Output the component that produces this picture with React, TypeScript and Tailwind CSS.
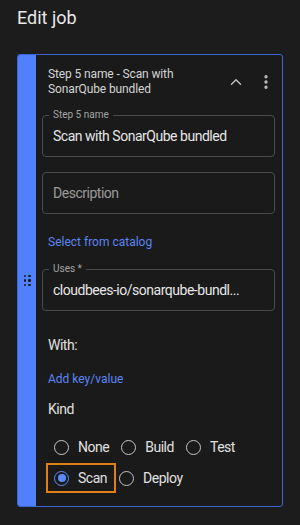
import { ChevronUp, EllipsisVertical } from "lucide-react";

const kinds = [
  ["None", "Build", "Test"],
  ["Scan", "Deploy"],
];

function OutlinedField({ label, value, placeholder }: { label?: string; value?: string; placeholder?: string }) {
  return (
    <div className="relative flex h-[42px] items-center rounded-[4px] border border-[#4a4a4a] pl-[10px]">
      {label && (
        <span className="absolute -top-[7px] left-[6px] bg-[#1a1a1a] px-[4px] text-[10px] leading-[12px] tracking-normal text-[#a3a3a3]">
          {label}
        </span>
      )}
      {value ? (
        <span className="truncate text-[14px] text-[#e6e6e6]">{value}</span>
      ) : (
        <span className="text-[14px] text-[#9a9a9a]">{placeholder}</span>
      )}
    </div>
  );
}

function Radio({ label, checked }: { label: string; checked?: boolean }) {
  return (
    <div className="relative flex h-[30px] items-center gap-[9px]">
      {checked && (
        <span className="pointer-events-none absolute -left-[8px] -right-[9px] top-0 bottom-0 border-2 border-[#e07f16]" />
      )}
      <span
        className={
          checked
            ? "flex h-[15px] w-[15px] items-center justify-center rounded-full border-[1.5px] border-[#5b8cff]"
            : "h-[15px] w-[15px] rounded-full border-[1.5px] border-[#c4c4c4]"
        }
      >
        {checked && <span className="h-[8px] w-[8px] rounded-full bg-[#5b8cff]" />}
      </span>
      <span className="text-[14px] text-[#e0e0e0]">{label}</span>
    </div>
  );
}

export default function App() {
  return (
    <div
      className="min-h-[525px] w-[300px] bg-[#1c1c1c] px-[17px] pt-[4px] tracking-[-0.03em]"
      style={{ fontFamily: "Roboto, 'Noto Sans', sans-serif" }}
    >
      <h1 className="text-[18px] leading-[28px] tracking-normal text-[#e8e8e8]">Edit job</h1>

      <div className="mt-[22px] flex overflow-hidden rounded-[3px] border border-[#3e66d0] bg-[#1a1a1a]">
        <div className="flex w-[18px] shrink-0 items-center justify-center bg-[#5080fb]">
          <div className="grid grid-cols-2 gap-[2px]">
            {Array.from({ length: 6 }).map((_, i) => (
              <span key={i} className="h-[2.5px] w-[2.5px] rounded-[1px] bg-[#1a1a1a]" />
            ))}
          </div>
        </div>

        <div className="flex-1 pl-[6px] pr-[7px] pb-[13px]">
          <div className="flex items-center pl-[6px] pt-[12px]">
            <div className="flex-1 text-[12px] leading-[15px] tracking-[-0.01em] text-[#d4d4d4]">
              Step 5 name - Scan with
              <br />
              SonarQube bundled
            </div>
            <div className="flex items-center gap-[12px] text-[#bdbdbd]">
              <ChevronUp size={18} strokeWidth={2} />
              <EllipsisVertical size={18} strokeWidth={2.5} />
            </div>
          </div>

          <div className="mt-[18px]">
            <OutlinedField label="Step 5 name" value="Scan with SonarQube bundled" />
          </div>
          <div className="mt-[15px]">
            <OutlinedField placeholder="Description" />
          </div>

          <div className="mt-[20px] pl-[6px] text-[12px] leading-[16px] tracking-normal text-[#5a86f5]">Select from catalog</div>

          <div className="mt-[19px]">
            <OutlinedField label="Uses *" value="cloudbees-io/sonarqube-bundl..." />
          </div>

          <div className="mt-[24px] pl-[6px] text-[14px] leading-[20px] text-[#e0e0e0]">With:</div>
          <div className="mt-[16px] pl-[6px] text-[12px] leading-[16px] tracking-normal text-[#5a86f5]">Add key/value</div>
          <div className="mt-[12px] pl-[6px] text-[14px] leading-[20px] text-[#e0e0e0]">Kind</div>

          <div className="mt-[13px] flex flex-col gap-[1px] pl-[12px]">
            {kinds.map((row, r) => (
              <div key={r} className="flex gap-[12px]">
                {row.map((k) => (
                  <Radio key={k} label={k} checked={k === "Scan"} />
                ))}
              </div>
            ))}
          </div>
        </div>
      </div>
    </div>
  );
}
